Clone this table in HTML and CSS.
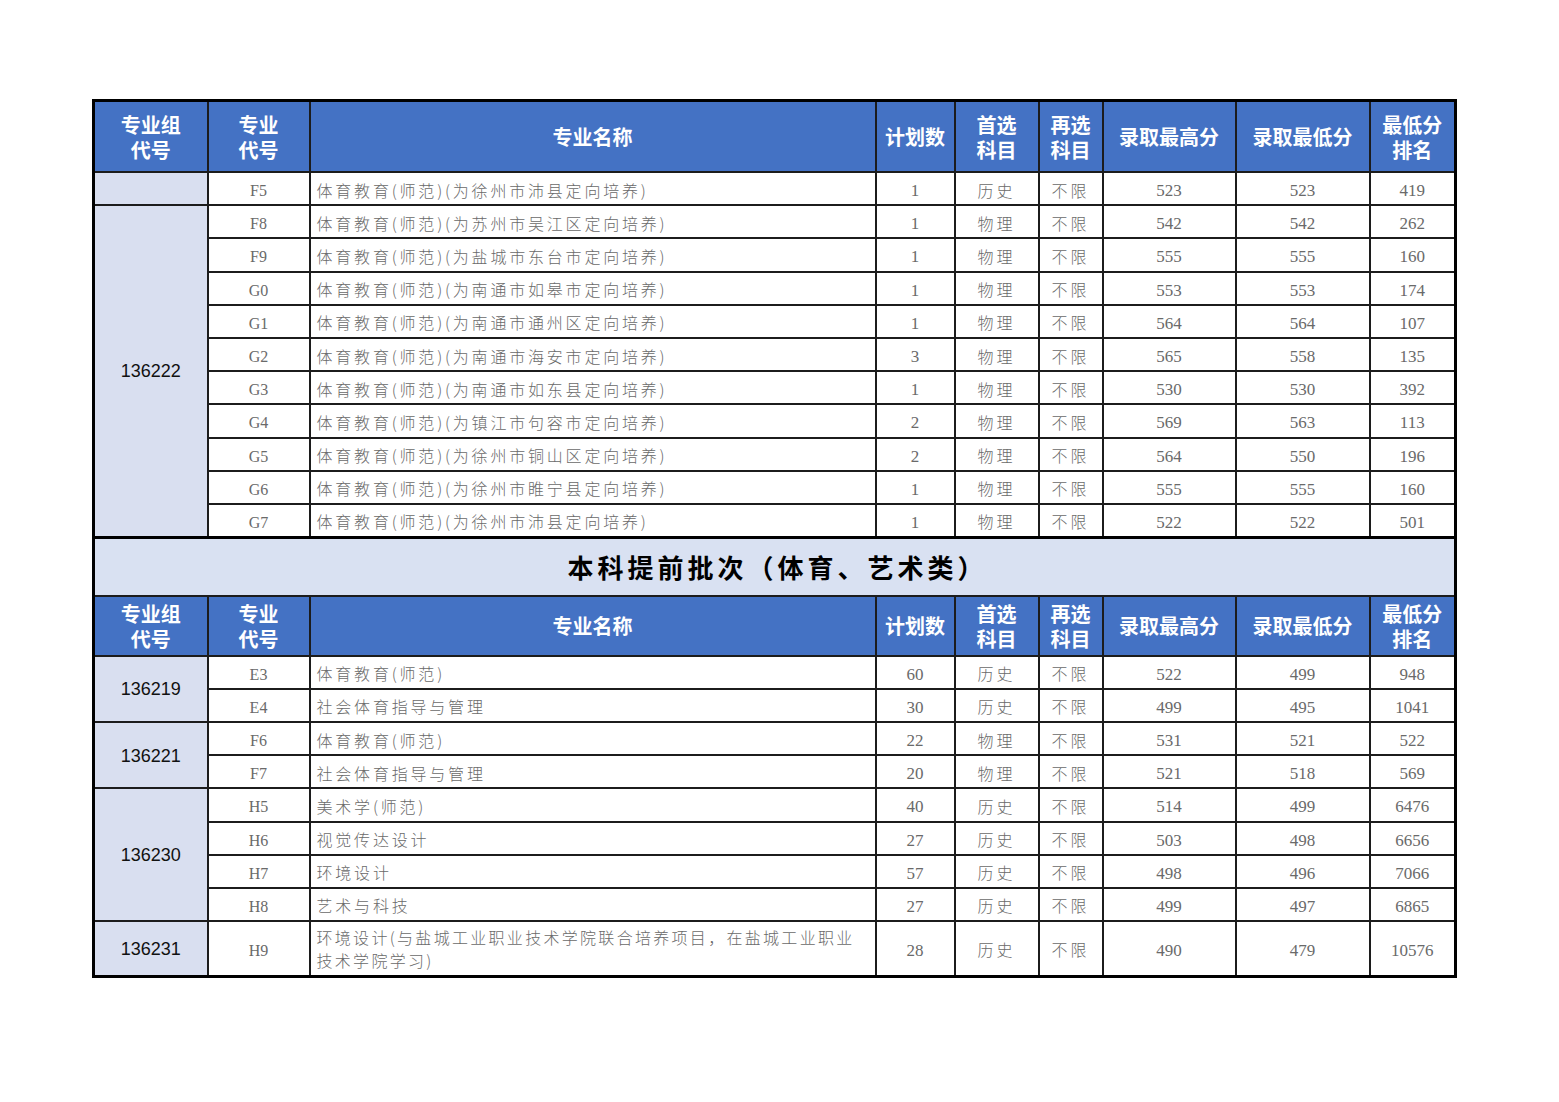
FILE: index.html
```html
<!DOCTYPE html>
<html lang="zh-CN">
<head>
<meta charset="utf-8">
<title>本科提前批次</title>
<link rel="stylesheet" href="styles.css">
</head>
<body>
<div class="page">
<table class="grid">
<colgroup>
<col class="c-group"><col class="c-code"><col class="c-name"><col class="c-plan"><col class="c-first"><col class="c-second"><col class="c-max"><col class="c-min"><col class="c-rank">
</colgroup>
<tbody>
<tr class="head head-1">
<th><span class="hl">专业组</span><span class="hl">代号</span></th><th><span class="hl">专业</span><span class="hl">代号</span></th><th>专业名称</th><th>计划数</th><th><span class="hl">首选</span><span class="hl">科目</span></th><th><span class="hl">再选</span><span class="hl">科目</span></th><th>录取最高分</th><th>录取最低分</th><th><span class="hl">最低分</span><span class="hl">排名</span></th>
</tr>
<tr class="row"><td class="group"></td><td class="code">F5</td><td class="name">体育教育(师范)(为徐州市沛县定向培养)</td><td class="num">1</td><td class="subj">历史</td><td class="subj">不限</td><td class="num">523</td><td class="num">523</td><td class="num">419</td></tr>
<tr class="row"><td class="group" rowspan="10">136222</td><td class="code">F8</td><td class="name">体育教育(师范)(为苏州市吴江区定向培养)</td><td class="num">1</td><td class="subj">物理</td><td class="subj">不限</td><td class="num">542</td><td class="num">542</td><td class="num">262</td></tr>
<tr class="row"><td class="code">F9</td><td class="name">体育教育(师范)(为盐城市东台市定向培养)</td><td class="num">1</td><td class="subj">物理</td><td class="subj">不限</td><td class="num">555</td><td class="num">555</td><td class="num">160</td></tr>
<tr class="row"><td class="code">G0</td><td class="name">体育教育(师范)(为南通市如皋市定向培养)</td><td class="num">1</td><td class="subj">物理</td><td class="subj">不限</td><td class="num">553</td><td class="num">553</td><td class="num">174</td></tr>
<tr class="row"><td class="code">G1</td><td class="name">体育教育(师范)(为南通市通州区定向培养)</td><td class="num">1</td><td class="subj">物理</td><td class="subj">不限</td><td class="num">564</td><td class="num">564</td><td class="num">107</td></tr>
<tr class="row"><td class="code">G2</td><td class="name">体育教育(师范)(为南通市海安市定向培养)</td><td class="num">3</td><td class="subj">物理</td><td class="subj">不限</td><td class="num">565</td><td class="num">558</td><td class="num">135</td></tr>
<tr class="row"><td class="code">G3</td><td class="name">体育教育(师范)(为南通市如东县定向培养)</td><td class="num">1</td><td class="subj">物理</td><td class="subj">不限</td><td class="num">530</td><td class="num">530</td><td class="num">392</td></tr>
<tr class="row"><td class="code">G4</td><td class="name">体育教育(师范)(为镇江市句容市定向培养)</td><td class="num">2</td><td class="subj">物理</td><td class="subj">不限</td><td class="num">569</td><td class="num">563</td><td class="num">113</td></tr>
<tr class="row"><td class="code">G5</td><td class="name">体育教育(师范)(为徐州市铜山区定向培养)</td><td class="num">2</td><td class="subj">物理</td><td class="subj">不限</td><td class="num">564</td><td class="num">550</td><td class="num">196</td></tr>
<tr class="row"><td class="code">G6</td><td class="name">体育教育(师范)(为徐州市睢宁县定向培养)</td><td class="num">1</td><td class="subj">物理</td><td class="subj">不限</td><td class="num">555</td><td class="num">555</td><td class="num">160</td></tr>
<tr class="row"><td class="code">G7</td><td class="name">体育教育(师范)(为徐州市沛县定向培养)</td><td class="num">1</td><td class="subj">物理</td><td class="subj">不限</td><td class="num">522</td><td class="num">522</td><td class="num">501</td></tr>
<tr class="section"><td colspan="9">本科提前批次（体育、艺术类）</td></tr>
<tr class="head head-2">
<th><span class="hl">专业组</span><span class="hl">代号</span></th><th><span class="hl">专业</span><span class="hl">代号</span></th><th>专业名称</th><th>计划数</th><th><span class="hl">首选</span><span class="hl">科目</span></th><th><span class="hl">再选</span><span class="hl">科目</span></th><th>录取最高分</th><th>录取最低分</th><th><span class="hl">最低分</span><span class="hl">排名</span></th>
</tr>
<tr class="row"><td class="group" rowspan="2">136219</td><td class="code">E3</td><td class="name">体育教育(师范)</td><td class="num">60</td><td class="subj">历史</td><td class="subj">不限</td><td class="num">522</td><td class="num">499</td><td class="num">948</td></tr>
<tr class="row"><td class="code">E4</td><td class="name">社会体育指导与管理</td><td class="num">30</td><td class="subj">历史</td><td class="subj">不限</td><td class="num">499</td><td class="num">495</td><td class="num">1041</td></tr>
<tr class="row"><td class="group" rowspan="2">136221</td><td class="code">F6</td><td class="name">体育教育(师范)</td><td class="num">22</td><td class="subj">物理</td><td class="subj">不限</td><td class="num">531</td><td class="num">521</td><td class="num">522</td></tr>
<tr class="row"><td class="code">F7</td><td class="name">社会体育指导与管理</td><td class="num">20</td><td class="subj">物理</td><td class="subj">不限</td><td class="num">521</td><td class="num">518</td><td class="num">569</td></tr>
<tr class="row"><td class="group" rowspan="4">136230</td><td class="code">H5</td><td class="name">美术学(师范)</td><td class="num">40</td><td class="subj">历史</td><td class="subj">不限</td><td class="num">514</td><td class="num">499</td><td class="num">6476</td></tr>
<tr class="row"><td class="code">H6</td><td class="name">视觉传达设计</td><td class="num">27</td><td class="subj">历史</td><td class="subj">不限</td><td class="num">503</td><td class="num">498</td><td class="num">6656</td></tr>
<tr class="row"><td class="code">H7</td><td class="name">环境设计</td><td class="num">57</td><td class="subj">历史</td><td class="subj">不限</td><td class="num">498</td><td class="num">496</td><td class="num">7066</td></tr>
<tr class="row"><td class="code">H8</td><td class="name">艺术与科技</td><td class="num">27</td><td class="subj">历史</td><td class="subj">不限</td><td class="num">499</td><td class="num">497</td><td class="num">6865</td></tr>
<tr class="row row-tall"><td class="group">136231</td><td class="code">H9</td><td class="name wrap">环境设计(与盐城工业职业技术学院联合培养项目，在盐城工业职业<br>技术学院学习)</td><td class="num">28</td><td class="subj">历史</td><td class="subj">不限</td><td class="num">490</td><td class="num">479</td><td class="num">10576</td></tr>
</tbody>
</table>
</div>
</body>
</html>
```

FILE: styles.css
```css
html, body {
  margin: 0;
  padding: 0;
  background: #ffffff;
}

.page {
  padding: 99px 0 0 92px;
}

.grid {
  border-collapse: collapse;
  table-layout: fixed;
  width: 1362px;
  border: 3px solid #000;
}

.c-group { width: 114px; }
.c-code { width: 102px; }
.c-name { width: 566px; }
.c-plan { width: 79px; }
.c-first { width: 84px; }
.c-second { width: 64px; }
.c-max { width: 133px; }
.c-min { width: 134px; }
.c-rank { width: 86px; }

.grid th,
.grid td {
  border: 2px solid #1c1c1c;
  padding: 0;
  text-align: center;
  vertical-align: middle;
  overflow: hidden;
  white-space: nowrap;
}

.head th {
  background: #4472c4;
  color: #ffffff;
  font-family: "Noto Sans CJK SC", sans-serif;
  font-weight: 700;
  font-size: 20px;
  line-height: 25px;
}

.head .hl {
  display: block;
  height: 25px;
  line-height: 25px;
}

.head-1 th { height: 69px; }
.head-2 th { height: 58px; }

.row td {
  height: 33.2px;
  padding-top: 2px;
  box-sizing: border-box;
  color: #6a6a6a;
  font-family: "Liberation Serif", "Noto Sans CJK SC", serif;
  font-size: 17px;
}

.row td.num,
.row td.code {
  padding-top: 5px;
}

.row-tall td { height: 55px; }

.row td.group {
  padding-top: 2px;
  background: #d9dff0;
  color: #111111;
  font-family: "Liberation Sans", "Noto Sans CJK SC", sans-serif;
  font-size: 18px;
}

.row td.code {
  font-family: "Liberation Serif", serif;
  font-size: 16px;
}

.row td.name {
  text-align: left;
  padding-left: 6px;
  font-family: "Noto Sans CJK SC", sans-serif;
  font-weight: 300;
  font-size: 16px;
  letter-spacing: 2.8px;
}

.row td.name.wrap {
  white-space: normal;
  letter-spacing: 2.3px;
  line-height: 23px;
}

.row td.subj {
  font-family: "Noto Sans CJK SC", sans-serif;
  font-weight: 300;
  font-size: 16px;
  letter-spacing: 3px;
}

.section td {
  height: 56px;
  border-top: 3px solid #000;
  background: #d9e1f2;
  color: #000000;
  font-family: "Noto Sans CJK SC", sans-serif;
  font-weight: 700;
  font-size: 26px;
  letter-spacing: 4px;
  padding-left: 6px;
}
```
